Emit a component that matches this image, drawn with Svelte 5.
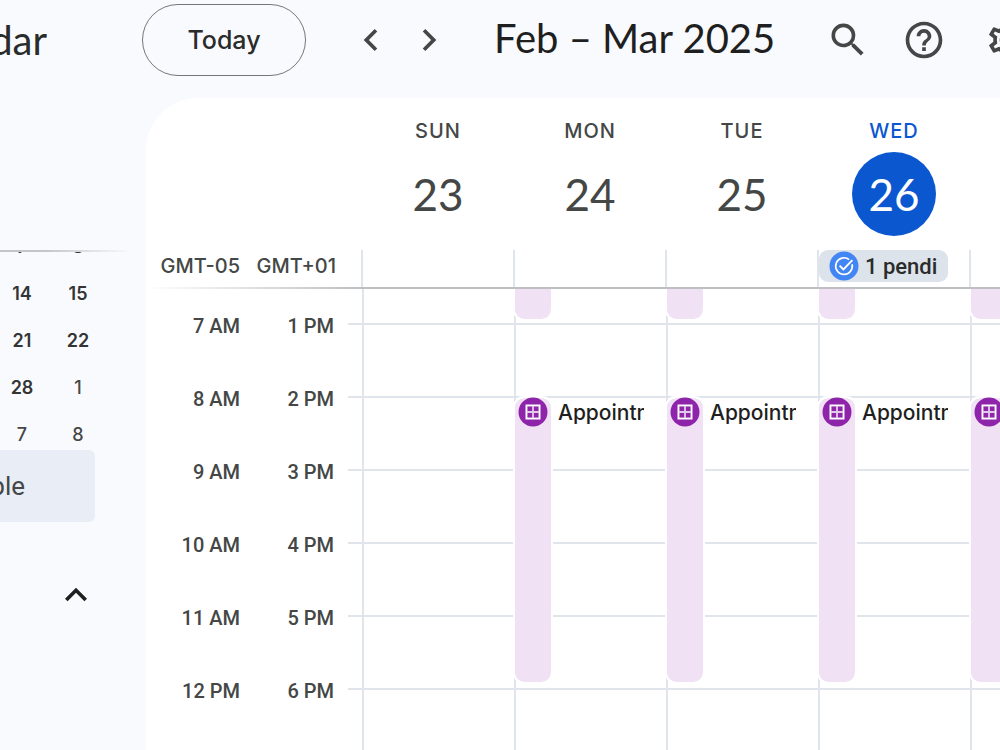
<script>
  const days = [
    { name: 'SUN', date: 23 },
    { name: 'MON', date: 24, busy: true },
    { name: 'TUE', date: 25, busy: true },
    { name: 'WED', date: 26, busy: true, today: true },
    { name: '', date: '', busy: true },
  ];

  const hours = [
    ['7 AM', '1 PM'],
    ['8 AM', '2 PM'],
    ['9 AM', '3 PM'],
    ['10 AM', '4 PM'],
    ['11 AM', '5 PM'],
    ['12 PM', '6 PM'],
  ];

  const weeks = [
    [{ n: 7 }, { n: 8 }],
    [{ n: 14 }, { n: 15 }],
    [{ n: 21 }, { n: 22 }],
    [{ n: 28 }, { n: 1, other: true }],
    [{ n: 7, other: true }, { n: 8, other: true }],
  ];
</script>

<div class="app">
  <header>
    <div class="brand">dar</div>
    <button class="today-btn">Today</button>
    <nav>
      <button class="icon" aria-label="Previous week">
        <svg viewBox="0 0 24 24"><path d="M15.41 7.41 14 6l-6 6 6 6 1.41-1.41L10.83 12z" /></svg>
      </button>
      <button class="icon" aria-label="Next week">
        <svg viewBox="0 0 24 24"><path d="M10 6 8.59 7.41 13.17 12l-4.58 4.59L10 18l6-6z" /></svg>
      </button>
    </nav>
    <h1>Feb – Mar 2025</h1>
    <div class="tools">
      <button class="icon" aria-label="Search">
        <svg viewBox="0 0 24 24"><path d="M15.5 14h-.79l-.28-.27A6.47 6.47 0 0 0 16 9.5 6.5 6.5 0 1 0 9.5 16c1.61 0 3.09-.59 4.23-1.57l.27.28v.79l5 4.99L20.49 19l-4.99-5zm-6 0C7.01 14 5 11.99 5 9.5S7.01 5 9.5 5 14 7.01 14 9.5 11.99 14 9.5 14z" /></svg>
      </button>
      <button class="icon" aria-label="Help">
        <svg viewBox="0 0 24 24"><path d="M11 18h2v-2h-2v2zm1-16C6.48 2 2 6.48 2 12s4.48 10 10 10 10-4.48 10-10S17.52 2 12 2zm0 18c-4.41 0-8-3.59-8-8s3.59-8 8-8 8 3.59 8 8-3.59 8-8 8zm0-14c-2.21 0-4 1.79-4 4h2c0-1.1.9-2 2-2s2 .9 2 2c0 2-3 1.75-3 5h2c0-2.25 3-2.5 3-5 0-2.21-1.79-4-4-4z" /></svg>
      </button>
    </div>
    <button class="icon" aria-label="Settings">
      <svg viewBox="0 0 24 24"><path d="M19.43 12.98c.04-.32.07-.64.07-.98 0-.34-.03-.66-.07-.98l2.11-1.65c.19-.15.24-.42.12-.64l-2-3.46a.5.5 0 0 0-.61-.22l-2.49 1c-.52-.4-1.08-.73-1.69-.98l-.38-2.65A.49.49 0 0 0 14 2h-4c-.25 0-.46.18-.49.42l-.38 2.65c-.61.25-1.17.59-1.69.98l-2.49-1a.5.5 0 0 0-.61.22l-2 3.46c-.13.22-.07.49.12.64l2.11 1.65c-.04.32-.07.65-.07.98 0 .33.03.66.07.98l-2.11 1.65c-.19.15-.24.42-.12.64l2 3.46a.5.5 0 0 0 .61.22l2.49-1c.52.4 1.08.73 1.69.98l.38 2.65c.03.24.24.42.49.42h4c.25 0 .46-.18.49-.42l.38-2.65c.61-.25 1.17-.59 1.69-.98l2.49 1a.5.5 0 0 0 .61-.22l2-3.46a.5.5 0 0 0-.12-.64l-2.11-1.65zm-1.98-1.71c.04.31.05.52.05.73s-.02.43-.05.73l-.14 1.13.89.7 1.08.84-.7 1.21-1.27-.51-1.04-.42-.9.68c-.43.32-.84.56-1.25.73l-1.06.43-.16 1.13-.2 1.35h-1.4l-.19-1.35-.16-1.13-1.06-.43c-.43-.18-.83-.41-1.23-.71l-.91-.7-1.06.43-1.27.51-.7-1.21 1.08-.84.89-.7-.14-1.13c-.03-.31-.05-.54-.05-.74s.02-.43.05-.73l.14-1.13-.89-.7-1.08-.84.7-1.21 1.27.51 1.04.42.9-.68c.43-.32.84-.56 1.25-.73l1.06-.43.16-1.13.2-1.35h1.39l.19 1.35.16 1.13 1.06.43c.43.18.83.41 1.23.71l.91.7 1.06-.43 1.27-.51.7 1.21-1.07.85-.89.7.14 1.13zM12 8c-2.21 0-4 1.79-4 4s1.79 4 4 4 4-1.79 4-4-1.79-4-4-4zm0 6c-1.1 0-2-.9-2-2s.9-2 2-2 2 .9 2 2-.9 2-2 2z" /></svg>
    </button>
  </header>

  <div class="body">
    <aside>
      <div class="mini">
        <table aria-label="Month">
          <tbody>
            {#each weeks as week}
              <tr>
                {#each week as day}
                  <td class:other={day.other}>{day.n}</td>
                {/each}
              </tr>
            {/each}
          </tbody>
        </table>
      </div>
      <div class="people">ble</div>
      <button class="collapse" aria-label="Collapse list">
        <svg viewBox="0 0 24 24"><path d="m12 8-6 6 1.41 1.41L12 10.83l4.59 4.58L18 14z" /></svg>
      </button>
    </aside>

    <main>
      <div class="days">
        {#each days as day}
          <div class="day" class:today={day.today}>
            <div class="name">{day.name}</div>
            <div class="date">{day.date}</div>
          </div>
        {/each}
      </div>

      <div class="allday">
        <div class="zones"><span>GMT-05</span><span>GMT+01</span></div>
        {#each days as day}
          <div class="slot">
            {#if day.today}
              <button class="chip">
                <svg viewBox="0 0 30 30">
                  <circle cx="15" cy="15" r="14.5" fill="#4285f4" />
                  <path d="M20.2 8.6A8.3 8.3 0 1 0 23.1 13.2" fill="none" stroke="#fff" stroke-width="1.7" />
                  <path d="m10.6 14.6 3.8 3.8 9-9.2" fill="none" stroke="#fff" stroke-width="1.9" />
                </svg>
                <span>1 pendi</span>
              </button>
            {/if}
          </div>
        {/each}
      </div>

      <div class="grid">
        <div class="times">
          {#each hours as [a, b]}
            <div class="hour"><span>{a}</span><span>{b}</span></div>
          {/each}
        </div>
        {#each days as day}
          <div class="column">
            {#if day.busy}
              <div class="strip early"></div>
              <div class="strip morning"></div>
              <button class="event">
                <svg viewBox="0 0 30 30">
                  <circle cx="15" cy="15" r="14.5" fill="#8e24aa" />
                  <path d="M7.5 7.5h15v15h-15z" fill="#fff" />
                  <path d="M9.3 9.3h11.4v11.4H9.3z" fill="#a24fba" />
                  <path d="M10 10h4v4h-4zM16 10h4v4h-4zM10 16h4v4h-4zM16 16h4v4h-4z" fill="#8e24aa" />
                  <path d="M15 9v12M9 15h12" stroke="#e3c8ea" stroke-width="1.8" />
                </svg>
                <span>Appointm</span>
              </button>
            {/if}
          </div>
        {/each}
      </div>
    </main>
  </div>
</div>

<style>
  :global(body) {
    margin: 0;
    background: #f9fafe;
  }
  .app {
    display: flex;
    flex-direction: column;
    height: 100vh;
    overflow: hidden;
    font-family: 'Roboto', 'Liberation Sans', sans-serif;
    color: #444746;
  }
  button {
    font: inherit;
    color: inherit;
    background: none;
    border: 0;
    padding: 0;
  }
  svg {
    display: block;
    flex: none;
  }
  header {
    display: flex;
    align-items: center;
    flex: none;
    height: 80px;
    padding-bottom: 18px;
    color: #2a2b2b;
  }
  .brand {
    display: flex;
    justify-content: flex-end;
    flex: none;
    width: 47px;
    margin-right: 95px;
    overflow: hidden;
    font: 400 40px 'Lato', sans-serif;
  }
  .today-btn {
    box-sizing: border-box;
    flex: none;
    width: 164px;
    height: 72px;
    border: 1px solid #747775;
    border-radius: 36px;
    font: 500 25px 'Inter', sans-serif;
  }
  nav {
    display: flex;
    gap: 14px;
    margin: 0 43px;
  }
  .icon {
    flex: none;
    color: #444746;
  }
  .icon svg {
    width: 44px;
    height: 44px;
    fill: currentColor;
  }
  h1 {
    flex: none;
    width: 332px;
    margin: 0;
    padding-bottom: 4px;
    font: 400 40px 'Lato', sans-serif;
    color: #1f1f1f;
    white-space: nowrap;
  }
  .tools {
    display: flex;
    gap: 32px;
    margin-right: 39px;
  }
  .body {
    display: flex;
    flex: 1;
    min-height: 0;
  }
  aside {
    flex: none;
    width: 146px;
    padding-top: 152px;
  }
  .mini {
    height: 200px;
    overflow: hidden;
    display: flex;
    align-items: flex-start;
    border-top: 2px solid;
    border-image: linear-gradient(90deg, #c3c5c8 30%, transparent 90%) 1;
    color: #333535;
  }
  table {
    width: 112px;
    margin: -29px 0 0 -6px;
    border-collapse: collapse;
    font: 600 18px 'Inter', sans-serif;
  }
  td {
    width: 56px;
    height: 47px;
    padding: 0;
    text-align: center;
  }
  td.other {
    color: #444746;
    font-weight: 500;
  }
  .people {
    display: flex;
    align-items: center;
    justify-content: flex-end;
    box-sizing: border-box;
    width: 95px;
    height: 72px;
    margin-top: -2px;
    padding-right: 70px;
    overflow: hidden;
    background: #e9eef6;
    border-radius: 0 6px 6px 0;
    font-size: 26px;
  }
  .collapse {
    margin: 51px 0 0 54px;
    color: #1f1f1f;
  }
  .collapse svg {
    width: 44px;
    height: 44px;
    fill: currentColor;
  }
  main {
    display: flex;
    flex-direction: column;
    flex: 1;
    min-width: 0;
    overflow: hidden;
    background: #fff;
    border-radius: 52px 0 0 0;
  }
  .days,
  .allday,
  .grid {
    display: grid;
    grid-template-columns: 216px repeat(5, minmax(152px, 1fr));
  }
  .days {
    flex: none;
    height: 152px;
  }
  .day {
    display: flex;
    flex-direction: column;
    align-items: center;
  }
  .day:first-child {
    grid-column-start: 2;
  }
  .name {
    height: 24px;
    margin-top: 21px;
    font: 500 20px/24px 'Inter', sans-serif;
    letter-spacing: 1px;
  }
  .date {
    width: 84px;
    margin-top: 9px;
    border-radius: 50%;
    font: 400 44px/84px 'Lato', sans-serif;
    text-align: center;
  }
  .today .name {
    color: #0b57d0;
  }
  .today .date {
    color: #fff;
    background: #0b57d0;
  }
  .allday {
    flex: none;
    height: 37px;
    grid-template-columns: 215px repeat(5, minmax(152px, 1fr));
    border-bottom: 2px solid;
    border-image: linear-gradient(90deg, transparent, #bdbfc0 216px) 1;
  }
  .zones,
  .hour {
    display: grid;
    grid-template-columns: 94px 94px;
    font: 500 20px/24px 'Roboto', sans-serif;
    text-align: right;
  }
  .zones {
    grid-template-columns: 94px 96px;
    padding-top: 4px;
    font: 500 20px/24px 'Inter', sans-serif;
  }
  .slot {
    border-left: 2px solid #e0e5ec;
  }
  .chip {
    display: flex;
    align-items: center;
    gap: 6px;
    width: 129px;
    height: 32px;
    padding-left: 10px;
    background: #dde3ea;
    border-radius: 9px;
    color: #2a2b2b;
    font-size: 22px;
    font-weight: 500;
    white-space: nowrap;
  }
  .chip svg,
  .event svg {
    width: 30px;
    height: 30px;
  }
  .grid {
    flex: 1;
    min-height: 0;
    overflow: hidden;
    background: repeating-linear-gradient(transparent 0 34px, #e0e5ec 34px 36px, transparent 36px 73px) 202px 0 no-repeat;
  }
  .times {
    padding-top: 25px;
  }
  .hour {
    height: 73px;
  }
  .column {
    position: relative;
    border-left: 2px solid #e0e5ec;
  }
  .strip {
    position: absolute;
    left: -1px;
    width: 36px;
    background: #f0e2f4;
    outline: 2px solid #fff;
  }
  .early {
    top: 0;
    height: 30px;
    border-radius: 0 0 9px 9px;
  }
  .morning {
    top: 109px;
    height: 284px;
    border-radius: 9px;
  }
  .event {
    position: absolute;
    top: 108px;
    left: 2px;
    display: flex;
    align-items: flex-start;
    gap: 10px;
    width: 126px;
    overflow: hidden;
    color: #1f1f1f;
    font: 500 21px/30px 'Inter', sans-serif;
    white-space: nowrap;
  }
  .event span {
    padding-top: 1px;
  }
</style>
